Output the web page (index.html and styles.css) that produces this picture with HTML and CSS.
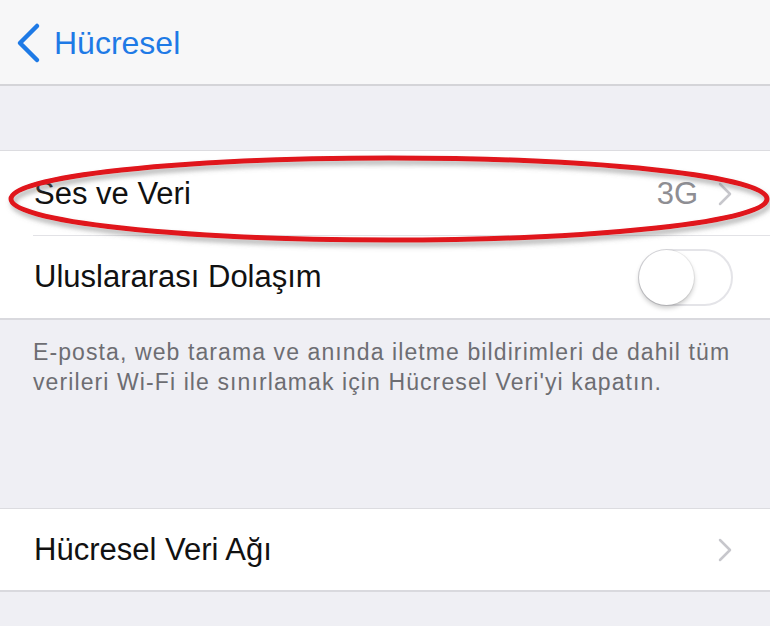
FILE: index.html
```html
<!DOCTYPE html>
<html lang="tr">
<head>
<meta charset="utf-8">
<title>Hücresel</title>
<link rel="stylesheet" href="styles.css">
</head>
<body>
<div class="screen">
  <header class="nav">
    <a class="back">
      <svg class="back-icon" width="30" height="44" viewBox="0 0 30 44"><path d="M22 5 L5 22 L22 39" fill="none" stroke="#1e7ae6" stroke-width="4.5" stroke-linecap="round" stroke-linejoin="round"/></svg>
      <span class="back-label">Hücresel</span>
    </a>
  </header>

  <div class="gap-top"></div>

  <section class="group">
    <div class="row row-first">
      <span class="label">Ses ve Veri</span>
      <span class="value">3G</span>
      <svg class="chev" width="14" height="24" viewBox="0 0 14 24"><path d="M2 2 L12 12 L2 22" fill="none" stroke="#c7c7cc" stroke-width="2.5" stroke-linecap="round" stroke-linejoin="round"/></svg>
    </div>
    <div class="row row-second">
      <span class="label">Uluslararası Dolaşım</span>
      <span class="toggle"><span class="knob"></span></span>
    </div>
  </section>

  <p class="footer">E-posta, web tarama ve anında iletme bildirimleri de dahil tüm verileri Wi-Fi ile sınırlamak için Hücresel Veri'yi kapatın.</p>

  <section class="group">
    <div class="row row-single">
      <span class="label">Hücresel Veri Ağı</span>
      <svg class="chev" width="14" height="24" viewBox="0 0 14 24"><path d="M2 2 L12 12 L2 22" fill="none" stroke="#c7c7cc" stroke-width="2.5" stroke-linecap="round" stroke-linejoin="round"/></svg>
    </div>
  </section>

  <svg class="annotation" width="770" height="626" viewBox="0 0 770 626">
    <defs>
      <filter id="sh" x="-10%" y="-50%" width="120%" height="200%">
        <feDropShadow dx="2" dy="4" stdDeviation="2.5" flood-color="#707070" flood-opacity="0.55"/>
      </filter>
    </defs>
    <ellipse cx="389" cy="199" rx="378" ry="41" fill="none" stroke="#e0121a" stroke-width="5" filter="url(#sh)"/>
  </svg>
</div>
</body>
</html>
```
FILE: styles.css
```css
* { box-sizing: border-box; }
html, body { margin: 0; padding: 0; }
body {
  background: #efeff4;
  font-family: "Liberation Sans", Arial, sans-serif;
  color: #111;
}
.screen {
  position: relative;
  width: 770px;
  height: 626px;
  overflow: hidden;
  background: #efeff4;
}
.nav {
  height: 86px;
  background: #f7f7f8;
  border-bottom: 2px solid #d4d4d8;
  display: flex;
  align-items: center;
  padding-left: 15px;
}
.back {
  display: flex;
  align-items: center;
  gap: 9px;
  color: #1e7ae6;
  margin-top: 2px;
}
.back-icon { display: block; }
.back-label {
  font-size: 32px;
}
.gap-top { height: 64px; }
.group {
  background: #fff;
  border-top: 1px solid #dcdce0;
  border-bottom: 2px solid #d9d9de;
}
.row {
  display: flex;
  align-items: center;
  padding-left: 34px;
  padding-right: 37px;
  position: relative;
}
.row-first { height: 85px; }
.row-first::after {
  content: "";
  position: absolute;
  left: 33px;
  right: 0;
  bottom: 0;
  height: 1px;
  background: #e2e2e6;
}
.row-second { height: 82px; }
.row-single { height: 81px; }
.label {
  font-size: 31px;
  flex: 1;
}
.value {
  font-size: 31px;
  color: #8e8e93;
  margin-right: 20px;
}
.chev { display: block; margin-right: 1px; }
.toggle {
  width: 95px;
  height: 57px;
  border-radius: 29px;
  border: 2px solid #e4e4e8;
  background: #fff;
  position: relative;
}
.knob {
  position: absolute;
  left: -1px;
  top: -1px;
  width: 55px;
  height: 55px;
  border-radius: 50%;
  background: #fff;
  box-shadow: 0 3px 5px rgba(0,0,0,0.22), 0 0 0 1px rgba(0,0,0,0.06);
}
.footer {
  margin: 0;
  padding: 17px 10px 111px 33px;
  font-size: 23px;
  letter-spacing: 1.1px;
  line-height: 30px;
  color: #6d6d72;
}
.annotation {
  position: absolute;
  left: 0;
  top: 0;
  pointer-events: none;
}
```
